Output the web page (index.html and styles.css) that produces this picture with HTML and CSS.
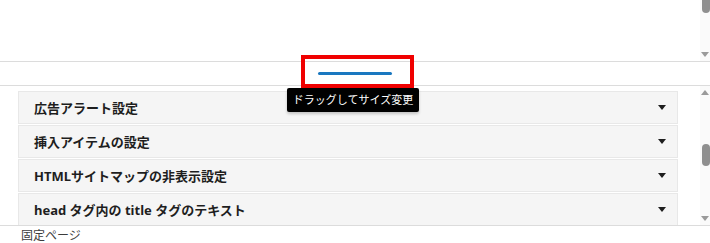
FILE: index.html
```html
<!DOCTYPE html>
<html lang="ja">
  <head>
    <meta charset="UTF-8" />
    <meta name="viewport" content="width=device-width, initial-scale=1.0" />
    <title>設定パネル</title>
    <link rel="stylesheet" href="styles.css">
  </head>
  <body>
    <div class="page">
      <div class="top">
        <div class="top-body"></div>
        <div class="scrollbar">
          <div class="thumb thumb-top"></div>
          <div class="arrow-down"></div>
        </div>
      </div>

      <div class="resizer">
        <div class="handle"></div>
        <div class="highlight"></div>
        <div class="tooltip">ドラッグしてサイズ変更</div>
      </div>

      <div class="lower">
        <div class="panels">
          <div class="panel"><span>広告アラート設定</span><i class="caret"></i></div>
          <div class="panel"><span>挿入アイテムの設定</span><i class="caret"></i></div>
          <div class="panel"><span>HTMLサイトマップの非表示設定</span><i class="caret"></i></div>
          <div class="panel"><span>head タグ内の title タグのテキスト</span><i class="caret"></i></div>
        </div>
        <div class="scrollbar scrollbar-lower">
          <div class="arrow-up"></div>
          <div class="thumb thumb-mid"></div>
          <div class="arrow-down"></div>
        </div>
      </div>

      <div class="footer">固定ページ</div>
    </div>
  </body>
</html>
```

FILE: styles.css
```css
body {
  margin: 0;
  font-family: "Noto Sans", "Noto Sans CJK JP", sans-serif;
  color: #1e1e1e;
  background: #fff;
}
.page {
  width: 710px;
  height: 243px;
  overflow: hidden;
}
.top {
  display: flex;
  height: 61px;
  border-bottom: 1px solid #dcdcdc;
}
.top-body {
  flex: 1;
}
.scrollbar {
  width: 10px;
  background: #fafafa;
  display: flex;
  flex-direction: column;
  align-items: flex-end;
  padding-bottom: 4px;
  box-sizing: border-box;
}
.thumb {
  width: 8px;
  background: #8f8f8f;
  border-radius: 4px;
}
.thumb-top {
  height: 13px;
  border-radius: 0 0 4px 4px;
}
.thumb-mid {
  height: 22px;
  margin-top: 49px;
}
.arrow-down,
.arrow-up {
  width: 0;
  height: 0;
  margin-right: 1px;
  border-left: 4px solid transparent;
  border-right: 4px solid transparent;
}
.arrow-down {
  margin-top: auto;
  border-top: 5px solid #9a9a9a;
}
.arrow-up {
  border-bottom: 5px solid #9a9a9a;
}
.resizer {
  position: relative;
  height: 23px;
  border-bottom: 1px solid #dcdcdc;
  display: flex;
  align-items: center;
  justify-content: center;
}
.handle {
  width: 74px;
  height: 3px;
  border-radius: 2px;
  background: #1a78c0;
}
.highlight {
  position: absolute;
  left: 301px;
  top: -7px;
  width: 113px;
  height: 33px;
  border: 4px solid #f00000;
  box-sizing: border-box;
}
.tooltip {
  position: absolute;
  left: 287px;
  top: 26px;
  z-index: 2;
  width: 132px;
  height: 24px;
  box-sizing: border-box;
  background: #000;
  color: #fff;
  font-size: 11px;
  line-height: 24px;
  text-align: center;
  border-radius: 2px;
  box-shadow: 0 2px 3px rgba(0, 0, 0, 0.2);
}
.lower {
  display: flex;
  height: 139px;
  border-bottom: 1px solid #dcdcdc;
  overflow: hidden;
}
.panels {
  flex: 1;
  padding: 5px 22px 0 18px;
}
.panel {
  display: flex;
  align-items: center;
  justify-content: space-between;
  height: 33px;
  margin-bottom: 1px;
  padding: 0 11px 0 15px;
  box-sizing: border-box;
  background: #f5f5f5;
  border: 1px solid #e8e8e8;
  font-size: 13px;
  font-weight: bold;
}
.caret {
  width: 0;
  height: 0;
  border-left: 4px solid transparent;
  border-right: 4px solid transparent;
  border-top: 5px solid #1e1e1e;
}
.scrollbar-lower {
  padding-top: 4px;
}
.footer {
  padding: 3px 0 0 21px;
  font-size: 12px;
  line-height: 14px;
  color: #3c3c3c;
}
```
